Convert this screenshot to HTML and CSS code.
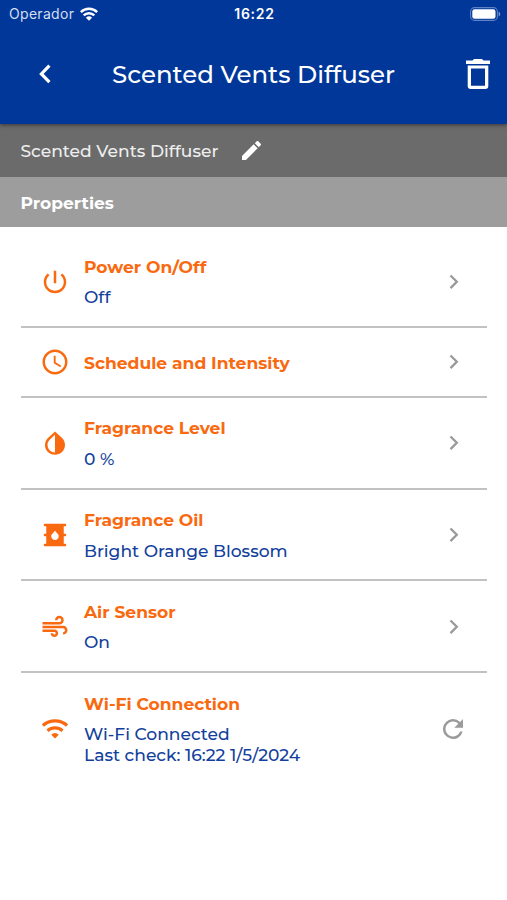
FILE: index.html
```
<!DOCTYPE html>
<html lang="en">
<head>
<meta charset="utf-8">
<title>Scented Vents Diffuser</title>
<link rel="stylesheet" href="styles.css">
</head>
<body>
<header class="topbar">
  <div class="status">
    <div class="carrier"><span class="operator">Operador</span>
      <svg class="signal" viewBox="0 0 18 14"><g fill="none" stroke="#fff" stroke-width="2.5"><path d="M.8 5.100a11.700 11.700 0 0 1 16.400 0M3.700 8.400a7.600 7.600 0 0 1 10.600 0"/></g><path fill="#fff" d="M9 13.700 5.900 10.800a4.500 4.500 0 0 1 6.200 0z"/></svg>
    </div>
    <span class="clock">16:22</span>
    <svg class="battery" viewBox="0 0 31 14"><rect x=".6" y=".6" width="26.8" height="12.8" rx="4" fill="none" stroke="#5f82c4" stroke-width="1.1"/><rect x="2.300" y="2.300" width="23.200" height="9.400" rx="2.300" fill="#fff"/><path fill="#7e9bd0" d="M28.700 4.700c2 .7 2 3.900 0 4.600z"/></svg>
  </div>
  <div class="nav">
    <svg class="back" viewBox="0 0 12 20"><path d="m10.400 1.700-8 8.200 8 8.200" fill="none" stroke="#fff" stroke-width="3.200"/></svg>
    <h1 class="heading">Scented Vents Diffuser</h1>
    <svg class="trash" viewBox="0 0 24 30"><path fill="#fff" d="M6.500 1.600 8 0h8l1.500 1.600H24v3.300H0V1.600zM1.700 6.500h20.600V27a3 3 0 0 1-3 3H4.700a3 3 0 0 1-3-3zM5 9.600v17.200h14V9.600z" fill-rule="evenodd"/></svg>
  </div>
</header>
<div class="device"><span>Scented Vents Diffuser</span>
  <svg class="pencil" viewBox="3 3 18 18"><path fill="#fff" d="M3 17.250V21h3.750L17.810 9.940l-3.750-3.750L3 17.250zM20.710 7.040a1 1 0 0 0 0-1.410l-2.340-2.340a1 1 0 0 0-1.410 0l-1.830 1.830 3.750 3.750 1.830-1.830z"/></svg>
</div>
<div class="section">Properties</div>
<main class="list">
  <div class="row">
    <svg class="icon" viewBox="0 0 24 24"><path d="M13 3h-2v10h2V3zm4.830 2.170-1.420 1.420A6.920 6.920 0 0 1 19 12c0 3.870-3.130 7-7 7s-7-3.130-7-7c0-2.190 1.010-4.140 2.580-5.420L6.170 5.170A8.930 8.930 0 0 0 3 12a9 9 0 0 0 18 0c0-2.740-1.230-5.180-3.170-6.830z"/></svg>
    <div class="info"><b class="name">Power On/Off</b><span class="value">Off</span></div>
    <svg class="chev" viewBox="0 0 10 16"><path d="m1.500 1.500 6.300 6.300-6.300 6.300"/></svg>
  </div>
  <div class="row short">
    <svg class="icon" viewBox="0 0 24 24"><path d="M11.990 2C6.470 2 2 6.480 2 12s4.470 10 9.990 10C17.520 22 22 17.520 22 12S17.520 2 11.990 2zM12 20c-4.420 0-8-3.580-8-8s3.580-8 8-8 8 3.580 8 8-3.580 8-8 8zm.5-13H11v6l5.250 3.150.750-1.230-4.500-2.670z"/></svg>
    <div class="info"><b class="name">Schedule and Intensity</b></div>
    <svg class="chev" viewBox="0 0 10 16"><path d="m1.500 1.500 6.300 6.300-6.300 6.300"/></svg>
  </div>
  <div class="row">
    <svg class="icon" viewBox="0 0 24 24"><path d="M17.660 7.930 12 2.770 6.340 7.930c-3.120 3.120-3.120 8.190 0 11.310C7.900 20.800 9.950 21.380 12 21.380s4.100-.580 5.660-2.140c3.120-3.120 3.120-8.190 0-11.310zM12 19.590c-1.600 0-3.110-.620-4.240-1.760A5.960 5.960 0 0 1 6 13.590c0-1.600.620-3.110 1.760-4.240L12 5.300v14.290z"/></svg>
    <div class="info"><b class="name">Fragrance Level</b><span class="value">0 %</span></div>
    <svg class="chev" viewBox="0 0 10 16"><path d="m1.500 1.500 6.300 6.300-6.300 6.300"/></svg>
  </div>
  <div class="row">
    <svg class="icon" viewBox="0 0 24 24"><path d="M20 13c.55 0 1-.45 1-1s-.45-1-1-1h-1V5h1c.55 0 1-.45 1-1s-.45-1-1-1H4c-.55 0-1 .45-1 1s.45 1 1 1h1v6H4c-.55 0-1 .45-1 1s.45 1 1 1h1v6H4c-.55 0-1 .45-1 1s.45 1 1 1h16c.55 0 1-.45 1-1s-.45-1-1-1h-1v-6h1zm-8 3c-1.660 0-3-1.320-3-2.950 0-1.300.520-1.670 3-4.550 2.470 2.860 3 3.240 3 4.550C15 14.680 13.660 16 12 16z"/></svg>
    <div class="info"><b class="name">Fragrance Oil</b><span class="value">Bright Orange Blossom</span></div>
    <svg class="chev" viewBox="0 0 10 16"><path d="m1.500 1.500 6.300 6.300-6.300 6.300"/></svg>
  </div>
  <div class="row">
    <svg class="icon" viewBox="0 0 24 24"><path d="M14.500 17c0 1.650-1.350 3-3 3s-3-1.350-3-3h2c0 .55.45 1 1 1s1-.45 1-1-.45-1-1-1H2v-2h9.500c1.650 0 3 1.350 3 3zM19 6.500C19 4.570 17.430 3 15.500 3S12 4.570 12 6.500h2c0-.83.67-1.500 1.500-1.500s1.500.67 1.500 1.500S16.330 8 15.500 8H2v2h13.500c1.930 0 3.500-1.570 3.500-3.500zm-.5 4.500H2v2h16.500c.83 0 1.500.67 1.500 1.500s-.67 1.500-1.500 1.500v2c1.930 0 3.500-1.570 3.500-3.500S20.430 11 18.500 11z"/></svg>
    <div class="info"><b class="name">Air Sensor</b><span class="value">On</span></div>
    <svg class="chev" viewBox="0 0 10 16"><path d="m1.500 1.500 6.300 6.300-6.300 6.300"/></svg>
  </div>
  <div class="row last">
    <svg class="icon" viewBox="0 0 24 24"><g fill="none" stroke="#f96a10" stroke-width="2.500"><path d="M2.300 9.200a14.500 14.500 0 0 1 19.400 0M6 13.400a9 9 0 0 1 12 0"/></g><path d="m12 19.500-3-3a4.300 4.300 0 0 1 6 0z"/></svg>
    <div class="info"><b class="name">Wi-Fi Connection</b><span class="value">Wi-Fi Connected</span><span class="value">Last check: 16:22 1/5/2024</span></div>
    <svg class="refresh" viewBox="4 4 16 16"><path d="M17.650 6.350A7.960 7.960 0 0 0 12 4a8 8 0 1 0 7.730 10h-2.080A6 6 0 1 1 12 6c1.660 0 3.140.690 4.220 1.780L13 11h7V4z"/></svg>
  </div>
</main>
</body>
</html>
```
FILE: styles.css
```
* { box-sizing: border-box; }
body { margin: 0; height: 900px; background: #fff; overflow: hidden; font-family: Montserrat, Inter, "Open Sans", sans-serif; }
svg { display: block; flex: none; }
.topbar { height: 124px; background: #003799; color: #fff; position: relative; box-shadow: 0 1px 4px rgba(0,0,0,.5); }
.status { height: 27px; padding: 0 6px 0 9px; display: grid; grid-template-columns: 1fr auto 1fr; align-items: center; font: 14px/27px Inter, sans-serif; }
.carrier { display: flex; align-items: center; gap: 6px; color: #d4def2; }
.operator { letter-spacing: .3px; }
.signal { width: 18px; height: 14px; }
.clock { font-weight: 600; letter-spacing: .7px; margin-right: 1px; }
.battery { width: 31px; height: 14px; justify-self: end; }
.nav { height: 94px; display: grid; grid-template-columns: 12px 1fr 24px; align-items: center; padding: 0 17px 0 39px; }
.back { width: 12px; height: 20px; }
.heading { margin: 0; padding-left: 61px; font-size: 24.450px; line-height: 30px; font-weight: 500; white-space: nowrap; }
.trash { width: 24px; height: 30px; }
.device { height: 53px; background: #6b6b6b; color: #eee; display: flex; align-items: center; padding-left: 20.500px; gap: 24px; font-size: 17.100px; font-weight: 500; }
.pencil { width: 19px; height: 19px; }
.section { height: 50px; background: #9d9d9d; color: #fff; display: flex; align-items: center; padding: 0 0 0 20.500px; font-size: 17.100px; font-weight: 700; }
.list { padding: 9.200px 20px 0 21px; }
.row { height: 91.700px; display: flex; align-items: center; border-bottom: 2px solid #c2c2c2; padding: 1px 28px 0 19px; }
.short { height: 70px; }
.last { height: 111px; border: 0; padding-right: 24px; }
.icon { width: 30px; height: 30px; fill: #f96a10; }
.info { flex: 1; padding-left: 14px; display: flex; flex-direction: column; align-items: flex-start; font-size: 17.100px; line-height: 21px; white-space: nowrap; }
.name { color: #f96a10; font-weight: 700; }
.value { color: #12409c; font-weight: 500; }
.name + .value { margin-top: 9.500px; }
.chev { width: 10px; height: 16px; fill: none; stroke: #999; stroke-width: 2.300; }
.refresh { width: 20px; height: 20px; fill: #9b9b9b; }
```
